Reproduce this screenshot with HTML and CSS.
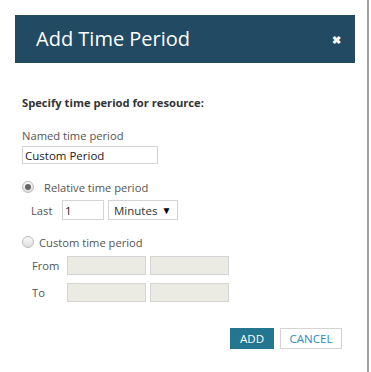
FILE: index.html
```html
<!doctype html>
<html>
<head>
<meta charset="utf-8">
<link rel="stylesheet" href="styles.css">
<title>Add Time Period</title>
</head>
<body>
<div class="frame">
<div class="dialog">
    <div class="dialog-head">
        <h1>Add Time Period</h1>
        <span class="close">&#x2716;</span>
    </div>
    <div class="dialog-body">
        <p class="intro">Specify time period for resource:</p>

        <label class="field-label">Named time period</label>
        <input class="text name" type="text" value="Custom Period">

        <div class="option">
            <span class="radio checked"></span>
            <span class="option-label">Relative time period</span>
        </div>
        <div class="row relative">
            <span class="row-label">Last</span>
            <input class="text count" type="text" value="1">
            <span class="select">Minutes <span class="arrow">&#9660;</span></span>
        </div>

        <div class="option custom">
            <span class="radio"></span>
            <span class="option-label">Custom time period</span>
        </div>
        <div class="row range">
            <span class="row-label">From</span>
            <span class="box"></span>
            <span class="box"></span>
        </div>
        <div class="row range">
            <span class="row-label">To</span>
            <span class="box"></span>
            <span class="box"></span>
        </div>

        <div class="actions">
            <button class="btn primary">ADD</button>
            <button class="btn cancel">CANCEL</button>
        </div>
    </div>
</div>
</div>
</body>
</html>
```

FILE: styles.css
```css
html, body {
    margin: 0;
    padding: 0;
    background: #fff;
}
body {
    font-family: "Open Sans", "Liberation Sans", Arial, sans-serif;
    font-size: 11.2px;
    color: #333;
}
.frame {
    width: 369px;
    height: 372px;
    border-right: 2px solid #a0a0a0;
    box-sizing: border-box;
    padding: 15px 0 0 15px;
}
.dialog {
    width: 340px;
}
.dialog-head {
    height: 48px;
    background: #224a63;
    color: #fff;
    display: flex;
    align-items: center;
    justify-content: space-between;
    padding: 0 14px 0 21px;
}
.dialog-head h1 {
    margin: 0;
    font-size: 20px;
    font-weight: normal;
    line-height: 24px;
}
.close {
    font-size: 11px;
    font-weight: bold;
}
.dialog-body {
    padding: 32px 7px 0 7px;
}
.intro {
    margin: 0 0 17px;
    font-weight: bold;
    color: #333;
    line-height: 16px;
}
.field-label {
    display: block;
    color: #555;
    line-height: 16px;
}
.text {
    font-family: inherit;
    font-size: 11.5px;
    color: #222;
    border: 1px solid #d4d4d4;
    box-sizing: border-box;
    height: 18px;
    padding: 0 2px;
    margin: 0;
    outline: none;
}
.name {
    display: block;
    margin-top: 2px;
    width: 136px;
}
.option {
    display: flex;
    align-items: center;
    margin-top: 15px;
    height: 16px;
    color: #555;
}
.option.custom {
    margin-top: 14px;
}
.radio {
    width: 10px;
    height: 10px;
    border-radius: 50%;
    border: 1px solid #bbb;
    background: linear-gradient(#fafafa, #dedede);
    position: relative;
    margin-right: 10px;
}
.custom .radio {
    margin-right: 5px;
}
.radio.checked::after {
    content: "";
    position: absolute;
    left: 2px;
    top: 2px;
    width: 6px;
    height: 6px;
    border-radius: 50%;
    background: #666;
}
.row {
    display: flex;
    align-items: center;
    gap: 4px;
    color: #555;
}
.relative {
    margin-top: 5px;
    padding-left: 9px;
}
.relative .row-label {
    width: 27px;
}
.count {
    width: 42px;
    height: 20px;
}
.select {
    display: inline-flex;
    align-items: center;
    border: 1px solid #d4d4d4;
    height: 20px;
    box-sizing: border-box;
    padding: 0 4px 0 5px;
    width: 70px;
    color: #333;
    font-size: 11.5px;
}
.arrow {
    font-size: 10px;
    color: #000;
    margin-left: 4px;
}
.range {
    padding-left: 10px;
    margin-top: 6px;
}
.range + .range {
    margin-top: 8px;
}
.range .row-label {
    width: 31px;
}
.box {
    width: 79px;
    height: 19px;
    box-sizing: border-box;
    background: #ebebe4;
    border: 1px solid #d4d4d4;
}
.actions {
    display: flex;
    justify-content: flex-end;
    gap: 6px;
    margin-top: 26px;
    padding-right: 6px;
}
.btn {
    font-family: inherit;
    font-size: 11.5px;
    height: 21px;
    padding: 0;
    border: 1px solid #d4d4d4;
    background: #fff;
    color: #2b8cc4;
    cursor: pointer;
}
.btn.primary {
    width: 44px;
    background: #247590;
    border-color: #247590;
    color: #fff;
}
.btn.cancel {
    width: 62px;
}
```
